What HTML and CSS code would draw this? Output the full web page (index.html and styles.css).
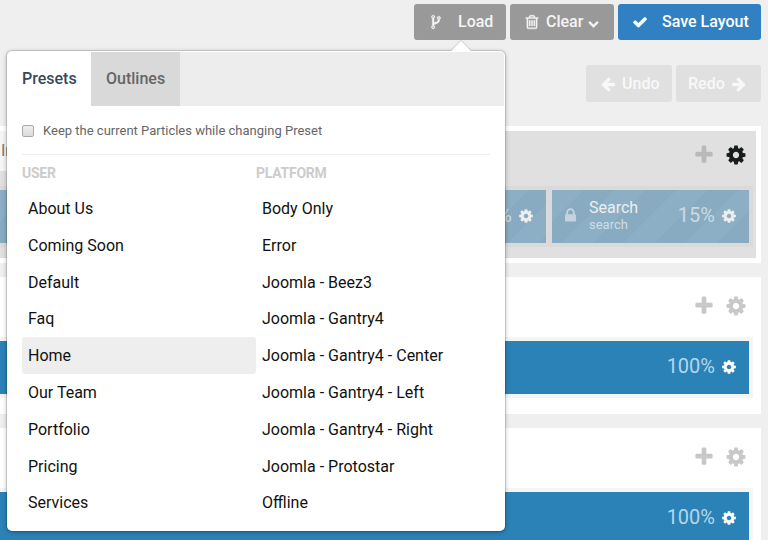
FILE: index.html
```html
<!DOCTYPE html>
<html lang="en">
<head>
<meta charset="utf-8">
<title>Layout Manager</title>
<link rel="stylesheet" href="styles.css">
</head>
<body>
<svg class="defs" aria-hidden="true">
  <symbol id="cog" viewBox="0 0 1792 1792"><path d="M1152 896q0-106-75-181t-181-75-181 75-75 181 75 181 181 75 181-75 75-181zm512-109v222q0 12-8 23t-20 13l-185 28q-19 54-39 91 35 50 107 138 10 12 10 25t-9 23q-27 37-99 108t-94 71q-12 0-26-9l-138-108q-44 23-91 38-16 136-29 186-7 28-36 28h-222q-14 0-24.500-8.500t-11.500-21.500l-28-184q-49-16-90-37l-141 107q-10 9-25 9-14 0-25-11-126-114-165-168-7-10-7-23 0-12 8-23 15-21 51-66.500t54-70.500q-27-50-41-99l-183-27q-13-2-21-12.500t-8-23.500v-222q0-12 8-23t19-13l186-28q14-46 39-92-40-57-107-138-10-12-10-24 0-10 9-23 26-36 98.500-107.500t94.500-71.500q13 0 26 10l138 107q44-23 91-38 16-136 29-186 7-28 36-28h222q14 0 24.500 8.500t11.500 21.500l28 184q49 16 90 37l142-107q9-9 24-9 13 0 25 10 129 119 165 170 7 8 7 22 0 12-8 23-15 21-51 66.500t-54 70.500q26 50 41 98l183 28q13 2 21 12.500t8 23.500z"/></symbol>
  <symbol id="plus" viewBox="0 0 1792 1792"><path d="M1600 736v192q0 40-28 68t-68 28h-416v416q0 40-28 68t-68 28h-192q-40 0-68-28t-28-68v-416h-416q-40 0-68-28t-28-68v-192q0-40 28-68t68-28h416v-416q0-40 28-68t68-28h192q40 0 68 28t28 68v416h416q40 0 68 28t28 68z"/></symbol>
  <symbol id="check" viewBox="0 0 1792 1792"><path d="M1671 566q0 40-28 68l-724 724-136 136q-28 28-68 28t-68-28l-136-136-362-362q-28-28-28-68t28-68l136-136q28-28 68-28t68 28l294 295 656-657q28-28 68-28t68 28l136 136q28 28 28 68z"/></symbol>
  <symbol id="trash" viewBox="0 0 1792 1792"><path d="M704 736v576q0 14-9 23t-23 9h-64q-14 0-23-9t-9-23v-576q0-14 9-23t23-9h64q14 0 23 9t9 23zm256 0v576q0 14-9 23t-23 9h-64q-14 0-23-9t-9-23v-576q0-14 9-23t23-9h64q14 0 23 9t9 23zm256 0v576q0 14-9 23t-23 9h-64q-14 0-23-9t-9-23v-576q0-14 9-23t23-9h64q14 0 23 9t9 23zm128 724v-948h-896v948q0 22 7 40.500t14.500 27 10.500 8.500h832q3 0 10.500-8.500t14.500-27 7-40.500zm-672-1076h448l-48-117q-7-9-17-11h-317q-10 2-17 11zm928 32v64q0 14-9 23t-23 9h-96v948q0 83-47 143.500t-113 60.500h-832q-66 0-113-58.500t-47-141.500v-952h-96q-14 0-23-9t-9-23v-64q0-14 9-23t23-9h309l70-167q15-37 54-63t79-26h320q40 0 79 26t54 63l70 167h309q14 0 23 9t9 23z"/></symbol>
  <symbol id="lock" viewBox="0 0 1792 1792"><path d="M640 768h512v-192q0-106-75-181t-181-75-181 75-75 181v192zm832 96v576q0 40-28 68t-68 28h-960q-40 0-68-28t-28-68v-576q0-40 28-68t68-28h32v-192q0-184 132-316t316-132 316 132 132 316v192h32q40 0 68 28t28 68z"/></symbol>
  <symbol id="arrow" viewBox="0 0 1792 1792"><path d="M1664 896v128q0 53-32.500 90.500t-84.500 37.500h-704l293 294q38 36 38 90t-38 90l-75 76q-37 37-90 37-52 0-91-37l-651-652q-37-37-37-90 0-52 37-91l651-650q38-38 91-38 52 0 90 38l75 74q38 38 38 91t-38 91l-293 293h704q52 0 84.500 37.500t32.500 90.500z"/></symbol>
  <symbol id="chevron" viewBox="0 0 1792 1792"><path d="M1683 808l-742 741q-19 19-45 19t-45-19l-742-741q-19-19-19-45.500t19-45.500l166-165q19-19 45-19t45 19l531 531 531-531q19-19 45-19t45 19l166 165q19 19 19 45.500t-19 45.500z"/></symbol>
  <symbol id="fork" viewBox="0 0 1792 1792"><path d="M672 1472q0-40-28-68t-68-28-68 28-28 68 28 68 68 28 68-28 28-68zm0-1152q0-40-28-68t-68-28-68 28-28 68 28 68 68 28 68-28 28-68zm640 128q0-40-28-68t-68-28-68 28-28 68 28 68 68 28 68-28 28-68zm96 0q0 52-26 96.500t-70 69.500q-2 287-226 414-67 38-203 81-128 40-169.500 71t-41.500 100v26q44 25 70 69.500t26 96.500q0 80-56 136t-136 56-136-56-56-136q0-52 26-96.500t70-69.500v-820q-44-25-70-69.500t-26-96.500q0-80 56-136t136-56 136 56 56 136q0 52-26 96.500t-70 69.500v497q54-26 154-57 55-17 87.500-29.500t70.500-31 59-39.500 40.500-51 28-69.500 8.500-91.500q-44-25-70-69.500t-26-96.500q0-80 56-136t136-56 136 56 56 136z"/></symbol>
</svg>

<header class="toolbar">
  <button class="btn btn-load"><svg class="icon"><use href="#fork"/></svg><span>Load</span></button>
  <button class="btn btn-clear"><svg class="icon"><use href="#trash"/></svg><span>Clear</span><svg class="icon caret"><use href="#chevron"/></svg></button>
  <button class="btn btn-save"><svg class="icon"><use href="#check"/></svg><span>Save Layout</span></button>
</header>
<div class="history">
  <button class="btn btn-undo"><svg class="icon"><use href="#arrow"/></svg><span>Undo</span></button>
  <button class="btn btn-redo"><span>Redo</span><svg class="icon flip"><use href="#arrow"/></svg></button>
</div>

<main class="sections">
  <section class="section inherited">
    <div class="section-head"><span class="hint">In</span><svg class="icon plus"><use href="#plus"/></svg><svg class="icon gear"><use href="#cog"/></svg></div>
    <div class="row">
      <div class="block wide"><span class="size">85%</span><svg class="icon"><use href="#cog"/></svg></div>
      <div class="block narrow"><svg class="icon lock"><use href="#lock"/></svg><div class="particle"><b>Search</b><small>search</small></div><span class="size">15%</span><svg class="icon"><use href="#cog"/></svg></div>
    </div>
  </section>
  <section class="section">
    <div class="section-head"><svg class="icon plus"><use href="#plus"/></svg><svg class="icon gear"><use href="#cog"/></svg></div>
    <div class="row"><div class="block wide"><span class="size">100%</span><svg class="icon"><use href="#cog"/></svg></div></div>
  </section>
  <section class="section">
    <div class="section-head"><svg class="icon plus"><use href="#plus"/></svg><svg class="icon gear"><use href="#cog"/></svg></div>
    <div class="row"><div class="block wide"><span class="size">100%</span><svg class="icon"><use href="#cog"/></svg></div></div>
  </section>
</main>

<div class="popover">
  <nav class="tabs"><a class="tab active">Presets</a><a class="tab">Outlines</a></nav>
  <div class="pane">
    <label class="keep"><span class="box"></span>Keep the current Particles while changing Preset</label>
    <div class="columns">
      <div class="column">
        <h4>USER</h4>
        <ul><li>About Us</li><li>Coming Soon</li><li>Default</li><li>Faq</li><li class="current">Home</li><li>Our Team</li><li>Portfolio</li><li>Pricing</li><li>Services</li></ul>
      </div>
      <div class="column">
        <h4>PLATFORM</h4>
        <ul><li>Body Only</li><li>Error</li><li>Joomla - Beez3</li><li>Joomla - Gantry4</li><li>Joomla - Gantry4 - Center</li><li>Joomla - Gantry4 - Left</li><li>Joomla - Gantry4 - Right</li><li>Joomla - Protostar</li><li>Offline</li></ul>
      </div>
    </div>
  </div>
</div>
</body>
</html>
```
FILE: styles.css
```css
* { box-sizing: border-box; }
body {
  margin: 0;
  width: 768px;
  height: 540px;
  overflow: hidden;
  position: relative;
  background: #efefef;
  color: #111;
  font: 16px/22px Roboto, sans-serif;
}
.defs { display: none; }
.icon { width: 16px; height: 16px; fill: currentColor; flex: none; }

.toolbar, .history { display: flex; justify-content: flex-end; padding-right: 7px; }
.toolbar { padding-top: 4px; gap: 4px; }
.history { padding-top: 25px; gap: 4px; }
.btn {
  display: flex;
  align-items: center;
  height: 36px;
  padding: 0;
  border: 0;
  border-radius: 3px;
  background: #999;
  color: #f4f4f4;
  font: 500 16px/22px Roboto, sans-serif;
  white-space: nowrap;
}
.btn-load { width: 92px; padding-left: 14px; gap: 14px; }
.btn-load .icon, .btn-clear .icon { stroke: currentColor; stroke-width: 50px; }
.btn-clear { width: 104px; padding-left: 14px; gap: 6px; }
.btn-clear .caret { width: 11px; height: 11px; margin: 3px 0 0 -1px; }
.btn-save { width: 143px; padding-left: 14px; gap: 14px; background: #3180c2; color: #fff; }
.history .btn { height: 37px; background: #e0e0e0; color: #f8f8f8; }
.btn-undo { width: 86px; padding-left: 14px; gap: 6px; }
.history .btn-redo { width: 85px; padding-left: 12px; gap: 6px; }
.flip { transform: scaleX(-1); }

.sections { display: flex; flex-direction: column; gap: 14px; margin-top: 24px; }
.section {
  flex: none;
  width: 761px;
  height: 137px;
  background: #fff;
  padding-right: 8px;
}
.section-head {
  height: 60px;
  display: flex;
  align-items: center;
  justify-content: flex-end;
  gap: 10px;
  padding: 0 6px 2px 0;
  color: #c8c8c8;
}
.section-head .icon { width: 22px; height: 22px; }
.row {
  display: flex;
  gap: 6px;
  height: 61px;
  padding: 4px 4px 4px 0;
  background: #f5f5f5;
}
.block {
  display: flex;
  align-items: center;
  justify-content: flex-end;
  height: 53px;
  padding-right: 12px;
  background: #2a82b7;
  color: #fff;
}
.block.wide { flex: 1; }
.block > .icon { margin-top: -1px; }
.row .block > .icon:last-child { margin-bottom: 0; }
.size { margin: -4px 6px 0 0; font-size: 20px; color: #b4d7eb; }

.inherited {
  border: 5px solid #fff;
  border-left: 0;
  padding-right: 3px;
  background: #e0e0e0;
}
.inherited .section-head { height: 55px; padding: 0 6px 7px 0; color: #b9b9b9; }
.inherited .gear { color: #191c1d; }
.hint { align-self: flex-start; height: 40px; margin: 0 auto 0 0; padding-left: 1px; line-height: 40px; background: #f5f5f5; color: #777; }
.inherited .row { background: #dadada; }
.inherited .block { background: repeating-linear-gradient(135deg, #8cafc5 0 22px, #88abc1 22px 44px); color: #eee; }
.inherited .size { color: #cadae3; }
.narrow { width: 197px; }
.inherited .lock { width: 17px; height: 17px; color: #c4d4de; margin: -3px 10px 0 0; }
.particle { flex: 1; line-height: 17px; margin-top: -1px; }
.particle b, .particle small { display: block; }
.particle b { font-size: 16px; font-weight: 400; }
.particle small { font-size: 13px; color: #d0dde5; }
.inherited .narrow { padding-left: 10px; }
.inherited .block > .icon:last-child { margin-top: -1px; }

.popover {
  position: absolute;
  left: 7px;
  top: 51px;
  width: 498px;
  height: 480px;
  padding: 1px;
  border-radius: 5px;
  background: #fff;
  box-shadow: 0 0 0 1px rgba(0,0,0,.12), 0 1px 5px rgba(0,0,0,.3);
}
.popover::before {
  content: "";
  position: absolute;
  left: 447px;
  top: -7px;
  width: 14px;
  height: 14px;
  background: #fff;
  transform: rotate(45deg);
  box-shadow: -1px -1px 1px rgba(0,0,0,.12);
}
.tabs { position: relative; display: flex; height: 54px; background: #ededed; border-radius: 4px 4px 0 0; overflow: hidden; }
.tab { padding: 16px 0 0 15px; background: #d9d9d9; color: #666; font-weight: 500; width: 89px; }
.tab.active { width: 83px; padding-left: 14px; background: #fff; color: #354959; }
.pane { padding: 0 14px; }
.keep {
  display: flex;
  align-items: center;
  height: 49px;
  padding-top: 1px;
  border-bottom: 1px solid #eee;
  color: #666;
  font-size: 13px;
}
.box { width: 12px; height: 12px; margin-right: 9px; border: 1px solid #aaa; border-radius: 2px; background: linear-gradient(#eee, #dcdcdc); }
.columns { display: grid; grid-template-columns: 1fr 1fr; padding-top: 7px; }
h4 { margin: 0; font: 700 14px/22px Roboto, sans-serif; letter-spacing: -.25px; color: #ccc; }
ul { margin: 6px 0 0; padding: 0; list-style: none; }
li { height: 36.8px; padding: 0 6px; line-height: 37px; border-radius: 3px; }
.current { background: #eee; }
```
